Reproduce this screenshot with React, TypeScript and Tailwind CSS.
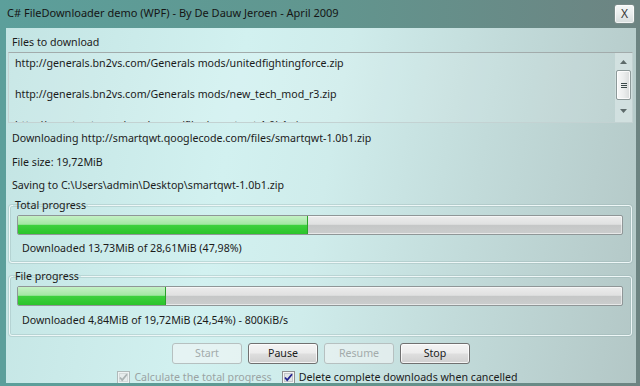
import React from "react";

function ProgressBar({ pct }: { pct: number }) {
  return (
    <div className="relative h-[20px] rounded-[2px] border border-[#8f9697] overflow-hidden bg-[linear-gradient(180deg,#ececec_0%,#e0e1e1_46%,#c5c7c7_52%,#cbcdcd_100%)] shadow-[inset_0_0_0_1px_rgba(255,255,255,0.55)]">
      <div
        className="absolute left-0 top-0 bottom-0 border-r border-[#2aa12a] bg-[linear-gradient(180deg,#c4f1c4_0%,#a3e7a3_46%,#3dd03d_52%,#2bc42b_100%)]"
        style={{ width: `${pct}%` }}
      />
    </div>
  );
}

function Btn({ label, disabled }: { label: string; disabled?: boolean }) {
  if (disabled) {
    return (
      <div className="w-[70px] h-[21px] flex items-center justify-center rounded-[3px] border border-[#b6c0c0] bg-[#f1f5f5]/60 text-[#a3abab]">
        {label}
      </div>
    );
  }
  return (
    <div className="w-[70px] h-[21px] flex items-center justify-center rounded-[3px] border border-[#707070] bg-[linear-gradient(180deg,#f4f4f4_0%,#ececec_48%,#dedede_52%,#d0d0d0_100%)] text-[#1c1c1c] shadow-[inset_0_0_0_1px_rgba(255,255,255,0.75)]">
      {label}
    </div>
  );
}

function Check({ disabled }: { disabled?: boolean }) {
  return (
    <svg width="13" height="13" viewBox="0 0 13 13" className="shrink-0">
      <rect
        x="0.5"
        y="0.5"
        width="12"
        height="12"
        fill={disabled ? "#eef3f3" : "#f4f4f4"}
        stroke={disabled ? "#b0baba" : "#8e8f8f"}
      />
      <rect x="2.5" y="2.5" width="8" height="8" fill={disabled ? "#e6ecec" : "#e2e4e6"} stroke={disabled ? "#d4dada" : "#c2c6ca"} />
      <path
        d="M3 6.5 L5.2 9 L10 3.2"
        fill="none"
        stroke={disabled ? "#aab3b3" : "#22228f"}
        strokeWidth="1.8"
      />
    </svg>
  );
}

function GroupBox({ title, pct, text, textTop }: { title: string; pct: number; text: string; textTop: string }) {
  return (
    <fieldset className="ml-[3px] mr-[4px] rounded-[3px] border border-[#eef7f7] pl-[7px] pr-[8px] shadow-[0_0_0_1px_rgba(150,175,175,0.35),inset_0_0_0_1px_rgba(150,175,175,0.35)]">
      <legend className="ml-[-4px] px-[2px] leading-[16px]">{title}</legend>
      <div className="mt-[2px]">
        <ProgressBar pct={pct} />
      </div>
      <div className={`${textTop} pl-[5px] leading-[16px]`}>{text}</div>
    </fieldset>
  );
}

export default function App() {
  return (
    <div className="w-[640px] h-[386px] flex flex-col overflow-hidden bg-[linear-gradient(90deg,#5c9f9b_0%,#61968f_50%,#6d8482_100%)] font-['Noto_Sans',sans-serif] text-[11px] text-[#1b1b1b]">
      {/* Title bar */}
      <div className="h-[28px] shrink-0 flex items-start justify-between pl-[7px] pr-[5px]">
        <div className="mt-[5px] leading-[16px] text-[#151515]">
          C# FileDownloader demo (WPF) - By De Dauw Jeroen - April 2009
        </div>
        <div className="mt-[4px] w-[21px] h-[20px] flex items-center justify-center rounded-[3px] border border-[#7a8c8a] bg-[linear-gradient(180deg,#f6f8f8_0%,#e9eded_50%,#d7dddd_100%)] text-[#3a3a3a] text-[12px] shadow-[inset_0_0_0_1px_rgba(255,255,255,0.7)]">
          X
        </div>
      </div>

      {/* Client area */}
      <div className="flex-1 min-h-0 ml-[6px] mr-[4px] mb-[3px] overflow-hidden flex flex-col text-[10.65px] bg-[linear-gradient(100deg,#c3e4e3_0%,#d2f1f0_35%,#cfeceb_50%,#c2dbda_72%,#b3c7c6_100%)]">
        <div className="shrink-0 mt-[6px] pl-[6px] leading-[16px]">Files to download</div>

        {/* List box */}
        <div className="shrink-0 mt-[2px] ml-[2px] mr-[3px] h-[71px] flex border border-[#c3d2d2] border-t-[#a2abab] bg-white/10 overflow-hidden">
          <div className="flex-1 pl-[6px] pt-[2px] overflow-hidden">
            <div className="leading-[16px] h-[31px]">http://generals.bn2vs.com/Generals mods/unitedfightingforce.zip</div>
            <div className="leading-[16px] h-[31px]">http://generals.bn2vs.com/Generals mods/new_tech_mod_r3.zip</div>
            <div className="leading-[16px] h-[31px]">http://smartqwt.googlecode.com/files/smartqwt-1.0b1.zip</div>
          </div>
          {/* Scrollbar */}
          <div className="w-[17px] shrink-0 flex flex-col items-center bg-[#e3eeee]/50">
            <div className="h-[17px] w-full flex items-center justify-center">
              <svg width="7" height="4" viewBox="0 0 7 4">
                <path d="M0 4 L3.5 0 L7 4 Z" fill="#5d6a6a" />
              </svg>
            </div>
            <div className="w-[15px] h-[30px] rounded-[2px] border border-[#8c9999] bg-[linear-gradient(90deg,#f7f8f8_0%,#eceeee_50%,#d9dcdc_100%)] flex flex-col items-center justify-center gap-[1px] shadow-[inset_0_0_0_1px_rgba(255,255,255,0.8)]">
              <div className="w-[6px] h-[1px] bg-[#3c4a4a]" />
              <div className="w-[6px] h-[1px] bg-[#3c4a4a]" />
              <div className="w-[6px] h-[1px] bg-[#3c4a4a]" />
            </div>
            <div className="flex-1 w-full flex items-center justify-center">
              <svg width="7" height="4" viewBox="0 0 7 4">
                <path d="M0 0 L7 0 L3.5 4 Z" fill="#5d6a6a" />
              </svg>
            </div>
          </div>
        </div>

        <div className="shrink-0 mt-[7px] pl-[6px] leading-[16px]">
          Downloading http://smartqwt.qooglecode.com/files/smartqwt-1.0b1.zip
        </div>
        <div className="shrink-0 mt-[8px] pl-[6px] leading-[16px]">File size: 19,72MiB</div>
        <div className="shrink-0 mt-[7px] pl-[6px] leading-[16px]">
          Saving to C:\Users\admin\Desktop\smartqwt-1.0b1.zip
        </div>

        <div className="shrink-0 mt-[4px]">
          <GroupBox
            title="Total progress"
            pct={47.98}
            text="Downloaded 13,73MiB of 28,61MiB (47,98%)"
            textTop="mt-[5px] mb-[6px]"
          />
        </div>
        <div className="shrink-0 mt-[5px]">
          <GroupBox
            title="File progress"
            pct={24.54}
            text="Downloaded 4,84MiB of 19,72MiB (24,54%) - 800KiB/s"
            textTop="mt-[6px] mb-[7px]"
          />
        </div>

        <div className="shrink-0 mt-[7px] flex justify-center gap-[6px]">
          <Btn label="Start" disabled />
          <Btn label="Pause" />
          <Btn label="Resume" disabled />
          <Btn label="Stop" />
        </div>

        <div className="shrink-0 mt-[5px] flex justify-center items-center pr-[7px] leading-[16px]">
          <Check disabled />
          <span className="ml-[4px] text-[#9aa3a3]">Calculate the total progress</span>
          <span className="ml-[10px] flex">
            <Check />
          </span>
          <span className="ml-[4px]">Delete complete downloads when cancelled</span>
        </div>
      </div>
    </div>
  );
}
